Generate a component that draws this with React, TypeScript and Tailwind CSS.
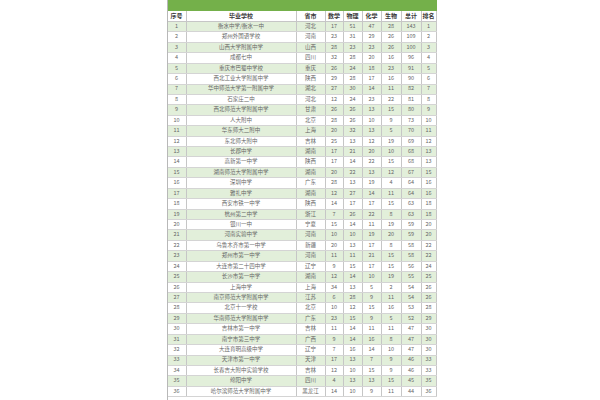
import React from "react";

const rows: [string, string, string, string, string, string, string, string][] = [
  ["1", "衡水中学/衡水一中", "河北", "17", "51", "47", "28", "143"],
  ["2", "郑州外国语学校", "河南", "23", "31", "29", "26", "109"],
  ["3", "山西大学附属中学", "山西", "28", "23", "23", "26", "100"],
  ["4", "成都七中", "四川", "32", "28", "20", "16", "96"],
  ["5", "重庆市巴蜀中学校", "重庆", "26", "24", "18", "23", "91"],
  ["6", "西北工业大学附属中学", "陕西", "29", "28", "17", "16", "90"],
  ["7", "华中师范大学第一附属中学", "湖北", "27", "30", "14", "11", "82"],
  ["8", "石家庄二中", "河北", "12", "24", "23", "22", "81"],
  ["9", "西北师范大学附属中学", "甘肃", "26", "26", "13", "15", "80"],
  ["10", "人大附中", "北京", "28", "26", "10", "9", "73"],
  ["11", "华东师大二附中", "上海", "20", "32", "13", "5", "70"],
  ["12", "东北师大附中", "吉林", "25", "13", "12", "19", "69"],
  ["13", "长郡中学", "湖南", "17", "21", "20", "10", "68"],
  ["14", "高新第一中学", "陕西", "17", "14", "22", "15", "68"],
  ["15", "湖南师范大学附属中学", "湖南", "20", "22", "13", "12", "67"],
  ["16", "深圳中学", "广东", "28", "13", "19", "4", "64"],
  ["17", "雅礼中学", "湖南", "12", "27", "14", "11", "64"],
  ["18", "西安市铁一中学", "陕西", "14", "17", "17", "15", "63"],
  ["19", "杭州第二中学", "浙江", "7", "26", "22", "8", "63"],
  ["20", "银川一中", "宁夏", "15", "14", "11", "19", "59"],
  ["21", "河南实验中学", "河南", "10", "10", "19", "20", "59"],
  ["22", "乌鲁木齐市第一中学", "新疆", "20", "13", "17", "8", "58"],
  ["23", "郑州市第一中学", "河南", "11", "11", "21", "15", "58"],
  ["24", "大连市第二十四中学", "辽宁", "9", "15", "17", "15", "56"],
  ["25", "长沙市第一中学", "湖南", "12", "14", "10", "19", "55"],
  ["26", "上海中学", "上海", "34", "13", "5", "2", "54"],
  ["27", "南京师范大学附属中学", "江苏", "6", "28", "9", "11", "54"],
  ["28", "北京十一学校", "北京", "10", "12", "15", "16", "53"],
  ["29", "华南师范大学附属中学", "广东", "23", "15", "9", "5", "52"],
  ["30", "吉林市第一中学", "吉林", "11", "14", "11", "11", "47"],
  ["31", "南宁市第三中学", "广西", "9", "14", "16", "8", "47"],
  ["32", "大连育明高级中学", "辽宁", "7", "16", "14", "10", "47"],
  ["33", "天津市第一中学", "天津", "17", "13", "7", "9", "46"],
  ["34", "长春吉大附中实验学校", "吉林", "12", "10", "15", "9", "46"],
  ["35", "绵阳中学", "四川", "4", "13", "13", "15", "45"],
  ["36", "哈尔滨师范大学附属中学", "黑龙江", "14", "10", "9", "11", "44"],
];
const ranks = ["1","2","3","4","5","6","7","8","9","10","11","12","13","13","15","16","16","18","18","20","20","22","22","24","25","26","26","28","29","30","30","30","33","33","35","36"];

const headers = ["序号", "毕业学校", "省市", "数学", "物理", "化学", "生物", "总计", "排名"];
const grid = "grid grid-cols-[19px_110px_29px_18px_19px_19px_20px_20px_15px]";

export default function App() {
  return (
    <div
      className="w-[600px] h-[400px] bg-white overflow-hidden flex justify-center"
      style={{ fontFamily: '"Noto Sans CJK SC", "Noto Sans", sans-serif' }}
    >
      <div className="w-[270px] ml-[3px] flex flex-col border-l border-[#b8b8b8]">
        <div className="h-[11px] bg-[#74b04a] shrink-0" />
        <div className={`${grid} h-[11px] shrink-0 bg-white border-b border-[#c6c6c6]`}>
          {headers.map((h, i) => (
            <div
              key={i}
              className="flex items-center justify-center border-r border-[#c6c6c6] text-[6px] font-bold text-[#3a3a3a] leading-none whitespace-nowrap"
            >
              {h}
            </div>
          ))}
        </div>
        {rows.map((r, idx) => (
          <div
            key={idx}
            className={`${grid} h-[10.43px] shrink-0 border-b border-[#d4d4d4] ${idx % 2 === 0 ? "bg-[#e2efda]" : "bg-white"}`}
          >
            {[...r, ranks[idx]].map((c, j) => (
              <div
                key={j}
                className="flex items-center justify-center border-r border-[#c6c6c6] text-[5.5px] text-[#666] leading-none whitespace-nowrap overflow-hidden"
              >
                {c}
              </div>
            ))}
          </div>
        ))}
      </div>
    </div>
  );
}
